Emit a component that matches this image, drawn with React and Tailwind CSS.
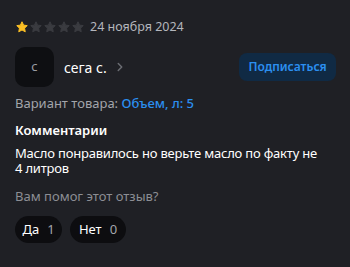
import { ChevronRight } from "lucide-react";

function Stars({ value }) {
  return (
    <div className="flex gap-[2px] pl-[1px]">
      {[1, 2, 3, 4, 5].map((i) => (
        <svg key={i} width="12" height="12" viewBox="0 0 24 24">
          <path
            d="M12 1.5l3.2 6.8 7.3.9-5.4 5.1 1.4 7.3L12 18l-6.5 3.6 1.4-7.3L1.5 9.2l7.3-.9z"
            strokeLinejoin="round"
            className={i <= value ? "fill-[#fbbf24] stroke-[#fbbf24]" : "fill-[#3a3b40] stroke-[#3a3b40]"}
            strokeWidth="2"
          />
        </svg>
      ))}
    </div>
  );
}

export default function App() {
  return (
    <div
      className="w-[350px] h-[267px] bg-[#1f2025] text-white px-[15px] pt-[19px] overflow-hidden"
      style={{ fontFamily: '"Noto Sans", sans-serif' }}
    >
      <div className="flex items-center gap-[6px] h-[16px]">
        <Stars value={1} />
        <span className="text-[12.5px] text-[#b4b6bc]">24 ноября 2024</span>
      </div>

      <div className="flex items-center mt-[12px]">
        <div className="w-[39px] h-[40px] rounded-[10px] bg-[#0e0f12] flex items-center justify-center text-[13px] text-[#9a9ca2]">
          с
        </div>
        <span className="ml-[10px] text-[14px]">сега с.</span>
        <ChevronRight size={14} strokeWidth={2.5} className="ml-[6px] text-[#6b6d73]" />
        <button className="ml-auto mr-[-1px] w-[97px] h-[28px] rounded-[8px] bg-[#102a44] text-[#2b8ff0] text-[12px] font-semibold">
          Подписаться
        </button>
      </div>

      <div className="mt-[6px] text-[13px] text-[#a3a5ab] leading-[20px]">
        Вариант товара: <span className="text-[#2b8ff0] font-medium">Объем, л: 5</span>
      </div>

      <div className="mt-[8px] text-[13px] font-semibold leading-[18px]">Комментарии</div>

      <div className="mt-[7px] text-[13px] leading-[15px] w-[312px] tracking-[-0.2px]">
        Масло понравилось но верьте масло по факту не 4 литров
      </div>

      <div className="mt-[10px] text-[13px] text-[#8c8e94] leading-[20px]">Вам помог этот отзыв?</div>

      <div className="flex gap-[8px] mt-[10px]">
        <button className="h-[27px] w-[47px] rounded-full bg-[#0d0d10] text-[13px] flex items-center justify-center gap-[8px]">
          <span>Да</span>
          <span className="text-[#a3a5ab]">1</span>
        </button>
        <button className="h-[27px] w-[56px] rounded-full bg-[#0d0d10] text-[13px] flex items-center justify-center gap-[8px]">
          <span>Нет</span>
          <span className="text-[#a3a5ab]">0</span>
        </button>
      </div>
    </div>
  );
}
